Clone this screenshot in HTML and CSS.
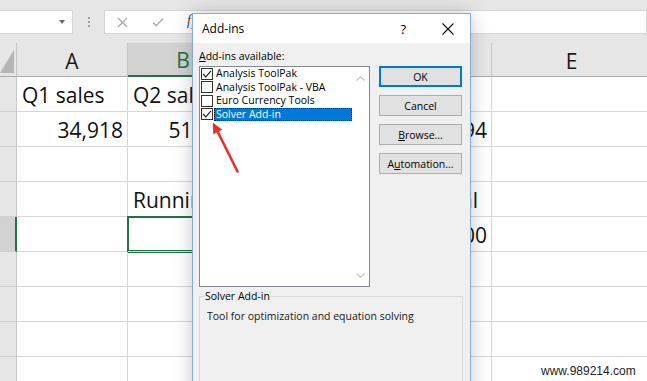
FILE: index.html
```html
<!DOCTYPE html>
<html>
<head>
<meta charset="utf-8">
<link rel="stylesheet" href="styles.css">
</head>
<body>
<div class="app">
  <div class="topbar">
    <div class="namebox"><span class="dd"></span></div>
    <div class="dots"><i></i><i></i><i></i></div>
    <div class="fbar">
      <svg class="ficon fx-cancel" width="11" height="11" viewBox="0 0 11 11"><path d="M1 1L10 10M10 1L1 10" stroke="#a8a8a8" stroke-width="1.3" fill="none"/></svg>
      <svg class="ficon fx-ok" width="12" height="10" viewBox="0 0 12 10"><path d="M1 5.5L4.2 8.7L11 1.5" stroke="#a8a8a8" stroke-width="1.3" fill="none"/></svg>
      <span class="fx">f<sub>x</sub></span>
    </div>
  </div>
  <div class="sheet">
    <div class="corner"><svg width="17" height="34" viewBox="0 0 17 34"><polygon points="0,30 14,30 14,7" fill="#b5b5b5"/></svg></div>
    <div class="ch">A</div>
    <div class="ch sel">B</div>
    <div class="ch">C</div>
    <div class="ch">D</div>
    <div class="ch">E</div>

    <div class="rh"></div>
    <div class="c">Q1 sales</div>
    <div class="c">Q2 sales</div>
    <div class="c">Q3 sales</div>
    <div class="c">Q4 sales</div>
    <div class="c"></div>

    <div class="rh"></div>
    <div class="c r">34,918</div>
    <div class="c r">51,267</div>
    <div class="c r">42,109</div>
    <div class="c r">128,294</div>
    <div class="c"></div>

    <div class="rh"></div>
    <div class="c"></div>
    <div class="c"></div>
    <div class="c"></div>
    <div class="c"></div>
    <div class="c"></div>

    <div class="rh"></div>
    <div class="c"></div>
    <div class="c">Running total</div>
    <div class="c"></div>
    <div class="c r pr">Goal</div>
    <div class="c"></div>

    <div class="rh sel"></div>
    <div class="c"></div>
    <div class="c sel"></div>
    <div class="c"></div>
    <div class="c r">150,000</div>
    <div class="c"></div>

    <div class="rh"></div>
    <div class="c"></div><div class="c"></div><div class="c"></div><div class="c"></div><div class="c"></div>
    <div class="rh"></div>
    <div class="c"></div><div class="c"></div><div class="c"></div><div class="c"></div><div class="c"></div>
    <div class="rh"></div>
    <div class="c"></div><div class="c"></div><div class="c"></div><div class="c"></div><div class="c"></div>
    <div class="rh"></div>
    <div class="c"></div><div class="c"></div><div class="c"></div><div class="c"></div><div class="c"></div>
  </div>
</div>

<div class="dialog">
  <div class="titlebar">
    <span class="title">Add-ins</span>
    <span class="help">?</span>
    <svg class="close" width="12" height="12" viewBox="0 0 12 12"><path d="M0.5 0.5L11.5 11.5M11.5 0.5L0.5 11.5" stroke="#111" stroke-width="1.1" fill="none"/></svg>
  </div>
  <div class="dbody">
    <div class="drow">
      <div class="left">
        <div class="lbl"><u>A</u>dd-ins available:</div>
        <div class="list">
          <div class="items">
            <div class="item"><span class="cb"><svg width="10" height="10" viewBox="0 0 10 10"><path d="M1 5L3.8 7.8L9 1.8" stroke="#222" stroke-width="1.2" fill="none"/></svg></span><span class="txt">Analysis ToolPak</span></div>
            <div class="item"><span class="cb"></span><span class="txt">Analysis ToolPak - VBA</span></div>
            <div class="item"><span class="cb"></span><span class="txt">Euro Currency Tools</span></div>
            <div class="item sel"><span class="cb"><svg width="10" height="10" viewBox="0 0 10 10"><path d="M1 5L3.8 7.8L9 1.8" stroke="#222" stroke-width="1.2" fill="none"/></svg></span><span class="txt">Solver Add-in</span></div>
          </div>
          <div class="sb">
            <svg width="9" height="5" viewBox="0 0 9 5"><path d="M0.5 4.5L4.5 0.8L8.5 4.5" stroke="#c2c2c2" stroke-width="1.1" fill="none"/></svg>
            <svg width="9" height="5" viewBox="0 0 9 5"><path d="M0.5 0.5L4.5 4.2L8.5 0.5" stroke="#c2c2c2" stroke-width="1.1" fill="none"/></svg>
          </div>
        </div>
      </div>
      <div class="btns">
        <div class="btn def">OK</div>
        <div class="btn">Cancel</div>
        <div class="btn"><span><u>B</u>rowse...</span></div>
        <div class="btn"><span>A<u>u</u>tomation...</span></div>
      </div>
    </div>
    <fieldset class="group">
      <legend>Solver Add-in</legend>
      <div class="desc">Tool for optimization and equation solving</div>
    </fieldset>
  </div>
</div>

<svg class="arrow" width="647" height="381" viewBox="0 0 647 381">
  <line x1="237.5" y1="171.5" x2="217.6" y2="131.5" stroke="#e8302a" stroke-width="2.6" stroke-linecap="round"/>
  <polygon points="212.8,122.5 222.3,129.8 213.2,134.3" fill="#e8302a"/>
</svg>

<div class="watermark">www.989214.com</div>
</body>
</html>
```

FILE: styles.css
```css
* { box-sizing: border-box; margin: 0; padding: 0; }
html, body { width: 647px; height: 381px; overflow: hidden; }
body { position: relative; background: #fff; font-family: "Open Sans", "Noto Sans", sans-serif; }

.topbar { height: 43px; background: #e6e6e6; display: flex; align-items: flex-start; padding-top: 10px; }
.namebox { width: 73px; height: 24px; background: #fff; border: 1px solid #d6d6d6; border-left: none; display: flex; align-items: center; justify-content: flex-end; padding-right: 7px; }
.dd { width: 0; height: 0; border-left: 3.5px solid transparent; border-right: 3.5px solid transparent; border-top: 4px solid #6a6a6a; }
.dots { width: 31px; display: flex; flex-direction: column; align-items: center; gap: 2px; padding-top: 7px; }
.dots i { display: block; width: 2px; height: 2px; background: #a0a0a0; }
.fbar { flex: 1; height: 24px; background: #fff; border: 1px solid #d6d6d6; display: flex; align-items: center; }
.fx-cancel { margin-left: 12px; }
.fx-ok { margin-left: 24px; }
.fx { margin-left: 23px; font-family: "Liberation Serif", serif; font-style: italic; font-size: 14px; color: #444; }
.fx sub { font-size: 9px; }

.sheet { display: grid; grid-template-columns: 17px 111px 111px 111px 142px 160px; grid-template-rows: 34px repeat(9, 35px); }
.corner { background: #e6e6e6; border-right: 1px solid #c6c6c6; border-bottom: 1px solid #ababab; overflow: hidden; }
.corner svg { display: block; }
.ch { background: #e6e6e6; border-right: 1px solid #c6c6c6; border-bottom: 1px solid #ababab; display: flex; align-items: center; justify-content: center; font-size: 21px; color: #1a1a1a; padding-top: 2px; }
.ch.sel { background: #d2d2d2; color: #217346; border-bottom: 2px solid #217346; }
.rh { background: #e6e6e6; border-right: 1px solid #c6c6c6; border-bottom: 1px solid #d0d0d0; }
.rh.sel { background: #d2d2d2; border-right: 2px solid #217346; }
.c { border-right: 1px solid #d6d6d6; border-bottom: 1px solid #d6d6d6; display: flex; align-items: flex-end; padding: 0 4px 1px 5px; font-size: 21px; line-height: 30px; color: #111; white-space: nowrap; overflow: hidden; }
.c.r { justify-content: flex-end; }
.c.pr { padding-right: 13px; }
.c.sel { box-shadow: 0 0 0 1px #217346, inset 0 0 0 1px #217346; overflow: visible; }

.dialog { position: absolute; left: 192px; top: 13px; width: 279px; height: 390px; border: 1px solid #84aad8; background: #f0f0f0; box-shadow: 0 0 18px rgba(0, 0, 0, 0.22); font-size: 10.5px; color: #000; }
.titlebar { height: 29px; background: #fff; display: flex; align-items: center; padding-left: 9px; }
.title { flex: 1; font-size: 12px; }
.help { font-size: 13px; margin-right: 36px; }
.close { margin-right: 16px; }

.dbody { padding: 6px 0 0 6px; }
.drow { display: flex; }
.left { width: 171px; }
.lbl { height: 14px; line-height: 14px; }
.list { margin-top: 3px; height: 221px; border: 1px solid #828790; background: #fff; display: flex; }
.items { flex: 1; }
.item { height: 13.5px; display: flex; align-items: center; white-space: nowrap; }
.cb { width: 12px; height: 12px; border: 1px solid #333; background: #fff; margin: 0 1px 0 1px; flex: none; display: flex; align-items: center; justify-content: center; }
.cb svg { display: block; }
.txt { flex: 1; padding-left: 2px; line-height: 13px; height: 13.5px; }
.item.sel .txt { background: #0078d7; color: #fff; outline: 1px dotted #1a1a1a; outline-offset: -1px; }
.sb { width: 17px; display: flex; flex-direction: column; justify-content: space-between; align-items: center; padding: 9px 0 8px; }
.sb svg { display: block; }

.btns { margin-left: 9px; margin-top: 17px; display: flex; flex-direction: column; gap: 8px; }
.btn { width: 83px; height: 21px; background: #e1e1e1; border: 1px solid #adadad; display: flex; align-items: center; justify-content: center; }
.btn.def { border-color: #0078d7; box-shadow: inset 0 0 0 1px #0078d7; }

.group { margin-top: 2px; width: 264px; height: 120px; border: 1px solid #d9d9d9; padding: 6px 7px; }
.group legend { margin-left: -3px; padding: 0 1px; line-height: 14px; }
.desc { line-height: 14px; color: #1a1a1a; }

.arrow { position: absolute; left: 0; top: 0; pointer-events: none; }
.watermark { position: absolute; left: 541px; top: 364px; font-family: "Liberation Sans", Arial, sans-serif; font-size: 12px; color: #222; }
```
